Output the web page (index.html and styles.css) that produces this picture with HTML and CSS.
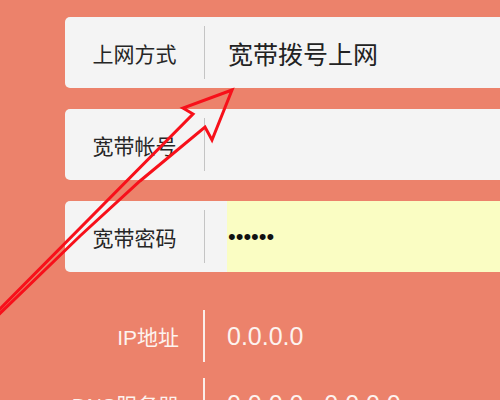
FILE: index.html
```html
<!DOCTYPE html>
<html lang="zh-CN">
<head>
<meta charset="utf-8">
<title>宽带拨号上网</title>
<link rel="stylesheet" href="styles.css">
</head>
<body>
<div class="page">
  <div class="cards">
    <div class="card">
      <div class="label">上网方式</div>
      <div class="sep"></div>
      <div class="value">宽带拨号上网</div>
    </div>
    <div class="card">
      <div class="label">宽带帐号</div>
      <div class="sep"></div>
      <div class="value"></div>
    </div>
    <div class="card">
      <div class="label">宽带密码</div>
      <div class="sep"></div>
      <div class="input"><span class="dots">••••••</span></div>
    </div>
  </div>
  <div class="info">
    <div class="row">
      <div class="info-label">IP地址</div>
      <div class="info-sep"></div>
      <div class="info-value">0.0.0.0</div>
    </div>
    <div class="row">
      <div class="info-label">DNS服务器</div>
      <div class="info-sep"></div>
      <div class="info-value">0.0.0.0 , 0.0.0.0</div>
    </div>
  </div>
  <svg class="arrow" viewBox="0 0 500 400" width="500" height="400" aria-hidden="true">
    <polygon points="232,90 183,108 193,114 -10,319 -10,323 80,236 140,181 205,127 212,140" fill="none" stroke="#f7101a" stroke-width="3" stroke-linejoin="miter"/>
  </svg>
</div>
</body>
</html>
```

FILE: styles.css
```css
html, body {
  margin: 0;
  padding: 0;
}

body {
  background: #ec826b;
  font-family: "Liberation Sans", "Noto Sans CJK SC", sans-serif;
  width: 500px;
  height: 400px;
  overflow: hidden;
}

.page {
  position: relative;
  width: 500px;
  height: 400px;
}

.cards {
  display: flex;
  flex-direction: column;
  gap: 21px;
  padding: 17px 0 0 65px;
}

.card {
  display: flex;
  align-items: center;
  height: 71px;
  background: #f4f4f4;
  border-radius: 5px 0 0 5px;
  overflow: hidden;
}

.label {
  width: 139px;
  text-align: center;
  font-size: 21px;
  color: #262626;
  flex-shrink: 0;
}

.sep {
  width: 1px;
  height: 53px;
  background: #c4c4c4;
  flex-shrink: 0;
}

.value {
  padding-left: 23px;
  font-size: 25px;
  color: #222;
}

.input {
  flex: 1;
  align-self: stretch;
  margin-left: 22px;
  background: #fafdc3;
  display: flex;
  align-items: center;
  padding-left: 1px;
}

.dots {
  font-size: 22px;
  color: #111;
  line-height: 1;
}

.info {
  display: flex;
  flex-direction: column;
  gap: 16px;
  padding: 38px 0 0 65px;
}

.row {
  display: flex;
  align-items: center;
  height: 52px;
}

.info-label {
  width: 114px;
  text-align: right;
  font-size: 21px;
  color: #fdf3ef;
  flex-shrink: 0;
}

.info-sep {
  width: 2px;
  height: 52px;
  margin-left: 24px;
  background: #fbeee9;
  flex-shrink: 0;
}

.info-value {
  padding-left: 22px;
  font-size: 25px;
  color: #fdf3ef;
  white-space: nowrap;
}

.arrow {
  position: absolute;
  top: 0;
  left: 0;
  pointer-events: none;
}
```
